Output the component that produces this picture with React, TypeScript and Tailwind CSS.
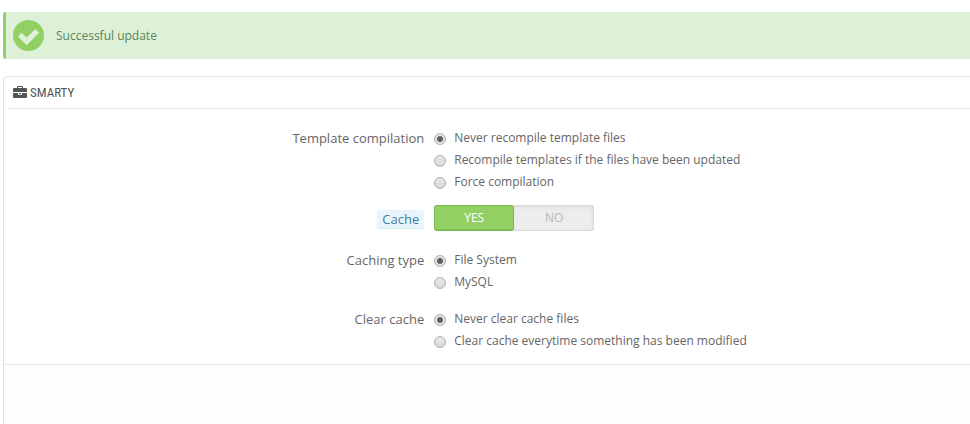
import { useState } from "react";
import type { ReactNode } from "react";

type RadioGroupProps = {
  name: string;
  label: string;
  options: string[];
};

const ROW = "grid grid-cols-[40fr_51fr] gap-[10px]";
const LABEL = "text-right text-[13px] leading-[22px]";

function RadioGroup({ name, label, options }: RadioGroupProps) {
  return (
    <div role="radiogroup" aria-labelledby={`${name}-label`} className={ROW}>
      <div id={`${name}-label`} className={LABEL}>
        {label}
      </div>
      <div>
        {options.map((option, i) => (
          <label key={option} className="flex h-[22px] items-center gap-2 text-xs">
            <input
              type="radio"
              name={name}
              defaultChecked={i === 0}
              className="mt-0.5 size-3 shrink-0 appearance-none rounded-full border border-[#adadad] bg-linear-to-b from-[#e9e9e9] to-[#d8d8d8] checked:bg-[radial-gradient(circle,#5f5f5f_2.5px,#e3e3e3_3.5px)]"
            />
            {option}
          </label>
        ))}
      </div>
    </div>
  );
}

function SwitchButton({ active, onClick, children }: { active: boolean; onClick: () => void; children: ReactNode }) {
  return (
    <button
      type="button"
      aria-pressed={active}
      onClick={onClick}
      className={
        active
          ? "h-[26px] w-20 rounded-[3px] border border-[#7ab84a] bg-[#92d063] pb-px text-xs text-white shadow-[inset_0_-1px_0_#7fbd50]"
          : "h-[26px] w-20 pb-px text-xs text-[#b7b7b7]"
      }
    >
      {children}
    </button>
  );
}

export default function App() {
  const [cache, setCache] = useState(true);

  return (
    <div className="flex min-h-screen flex-col bg-white pt-3 pl-[3px] font-['Open_Sans',sans-serif] text-[#666]">
      <div role="status" className="flex h-[47px] items-center gap-3 rounded-l-[3px] border-l-3 border-[#92d063] bg-[#ddf0d8] pl-[7px] text-xs text-[#56865a]">
        <svg className="size-[31px]" viewBox="0 0 31 31" aria-hidden="true">
          <circle cx="15.5" cy="15.5" r="15.5" fill="#92d063" />
          <path d="M6.8 14.6L13.6 21.4L24.2 10.8" fill="none" stroke="#ddf0d8" strokeWidth="5.4" />
        </svg>
        <span>Successful update</span>
      </div>

      <section className="mt-[17px] flex grow flex-col rounded-tl-[5px] border-t border-l border-[#e2e2e2]">
        <h3 className="ml-1 flex h-8 items-center gap-[3px] border-b border-[#eaeaea] pl-[5px] font-['Ubuntu_Condensed','Roboto_Condensed','Roboto',sans-serif] text-[13px] text-[#555]">
          <svg className="mb-0.5 size-3.5" viewBox="0 0 14 14" fill="currentColor" aria-hidden="true">
            <path d="M4 3V1.8Q4 1 4.8 1h4.4q.8 0 .8.8V3h2.8Q14 3 14 4.2V7H0V4.2Q0 3 1.2 3zM5 3h4V2H5zM0 8h5v1.2q0 .5.5.5h3q.5 0 .5-.5V8h5v3.8q0 1.2-1.2 1.2H1.2Q0 13 0 11.8zM6 8h2v1H6z" />
          </svg>
          SMARTY
        </h3>

        <form className="flex flex-col pt-[18px] pb-3">
          <RadioGroup
            name="compilation"
            label="Template compilation"
            options={[
              "Never recompile template files",
              "Recompile templates if the files have been updated",
              "Force compilation",
            ]}
          />
          <div className={`${ROW} mt-3 mb-[18px]`}>
            <div className="flex items-center justify-end pt-0.5">
              <span id="cache-label" className="rounded-[3px] border-b border-[#d5e9f3] bg-[#eaf5fb] px-[5px] text-[13px] leading-[18px] text-[#3f7fa3]">
                Cache
              </span>
            </div>
            <div
              role="group"
              aria-labelledby="cache-label"
              className="flex w-40 rounded-[3px] bg-[#ededed] shadow-[inset_0_0_0_1px_#dadada,inset_0_1px_4px_#cfcfcf]"
            >
              <SwitchButton active={cache} onClick={() => setCache(true)}>
                YES
              </SwitchButton>
              <SwitchButton active={!cache} onClick={() => setCache(false)}>
                NO
              </SwitchButton>
            </div>
          </div>
          <RadioGroup name="caching-type" label="Caching type" options={["File System", "MySQL"]} />
          <div className="mt-[15px]">
            <RadioGroup
              name="clear-cache"
              label="Clear cache"
              options={["Never clear cache files", "Clear cache everytime something has been modified"]}
            />
          </div>
        </form>

        <div className="grow border-t border-[#e8e8e8] bg-[#fcfdff]" />
      </section>
    </div>
  );
}
